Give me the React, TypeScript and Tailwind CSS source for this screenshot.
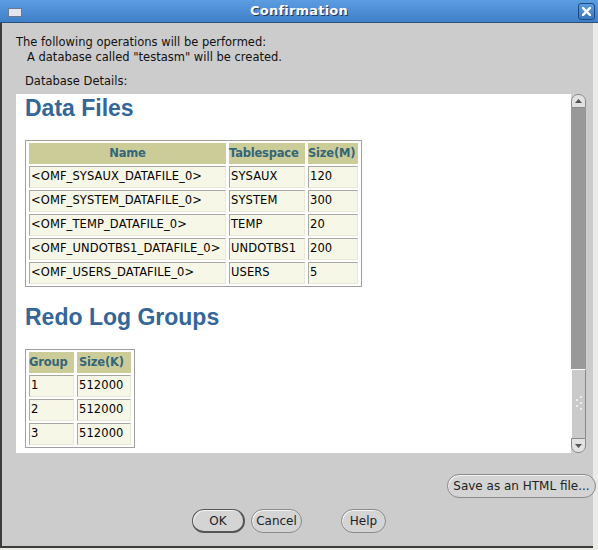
import React from "react";

const dataFiles = [
  ["<OMF_SYSAUX_DATAFILE_0>", "SYSAUX", "120"],
  ["<OMF_SYSTEM_DATAFILE_0>", "SYSTEM", "300"],
  ["<OMF_TEMP_DATAFILE_0>", "TEMP", "20"],
  ["<OMF_UNDOTBS1_DATAFILE_0>", "UNDOTBS1", "200"],
  ["<OMF_USERS_DATAFILE_0>", "USERS", "5"],
];

const redoGroups = [
  ["1", "512000"],
  ["2", "512000"],
  ["3", "512000"],
];

const th =
  "bg-[#cccc99] text-[#336677] font-bold text-[11.5px] tracking-[-0.2px] h-[21px] p-0 leading-none";
const td =
  "bg-[#f7f7e7] border-t border-l border-t-[#a8a8a0] border-l-[#a8a8a0] border-b border-r border-b-[#e8e8d8] border-r-[#e8e8d8] h-[22px] px-[1px] text-[11.5px] tracking-[0.1px] text-black text-left leading-none whitespace-nowrap";

function Btn({ label, w, strong }: { label: string; w: string; strong?: boolean }) {
  return (
    <button
      className={`${w} h-[24px] rounded-full bg-[#d4d4d4] text-[12px] text-[#222] ${
        strong
          ? "border border-[#555] border-r-2 border-b-2"
          : "border border-[#8a8a8a]"
      } shadow-[inset_1px_1px_0_#f4f4f4]`}
    >
      {label}
    </button>
  );
}

export default function App() {
  return (
    <div className="w-[598px] h-[550px] flex flex-col bg-[#ecece6] font-['DejaVu_Sans',sans-serif] overflow-hidden">
      {/* title bar */}
      <div className="h-[23px] relative flex items-center justify-center bg-gradient-to-b from-[#5c9ce0] to-[#4080c8] border-b border-[#2a4f7a]">
        <div className="absolute left-[8px] top-[8px] w-[14px] h-[9px] bg-[#e4e6ee] border border-[#6a7a90]" />
        <span className="text-white font-bold text-[13px] tracking-[0.2px] [text-shadow:1px_1px_0_#1e3a60]">
          Confirmation
        </span>
        <div className="absolute right-[3px] top-[3px] w-[17px] h-[17px] rounded-[3px] border border-[#1d4a80] bg-gradient-to-b from-[#5c9be0] to-[#3a78c0] flex items-center justify-center">
          <svg width="9" height="9" viewBox="0 0 9 9">
            <path d="M1 1 L8 8 M8 1 L1 8" stroke="white" strokeWidth="2.4" strokeLinecap="square" />
          </svg>
        </div>
      </div>

      {/* body */}
      <div className="flex-1 bg-[#cccccc] border-l-2 border-l-[#3c3c3c] border-b-2 border-b-[#3c3c3c] mr-[5px] mb-[2px] flex flex-col text-[#111] text-[11.5px]">
        <div className="pl-[14px] pt-[12px] leading-[15px]">
          <div>The following operations will be performed:</div>
          <div className="pl-[11px]">A database called "testasm" will be created.</div>
          <div className="pl-[9px] mt-[9px]">Database Details:</div>
        </div>

        <div className="ml-[14px] mt-[5px] w-[570px] h-[359px] flex bg-white">
          <div className="flex-1 pl-[9px] pt-[3px] overflow-hidden">
            <h2 className="font-['Liberation_Sans',sans-serif] font-bold text-[23px] leading-[23px] text-[#336699]">
              Data Files
            </h2>
            <table className="mt-[20px] table-fixed border border-[#a0a0a0] border-separate border-spacing-x-[3px] border-spacing-y-[2px]">
              <thead>
                <tr>
                  <th className={`${th} w-[197px]`}>Name</th>
                  <th className={`${th} w-[76px] text-left`}>Tablespace</th>
                  <th className={`${th} w-[50px] text-left`}>Size(M)</th>
                </tr>
              </thead>
              <tbody>
                {dataFiles.map((r) => (
                  <tr key={r[0]}>
                    {r.map((c, i) => (
                      <td key={i} className={td}>
                        {c}
                      </td>
                    ))}
                  </tr>
                ))}
              </tbody>
            </table>

            <h2 className="mt-[19px] font-['Liberation_Sans',sans-serif] font-bold text-[23px] leading-[23px] text-[#336699]">
              Redo Log Groups
            </h2>
            <table className="mt-[20px] table-fixed border border-[#a0a0a0] border-separate border-spacing-x-[3px] border-spacing-y-[2px]">
              <thead>
                <tr>
                  <th className={`${th} w-[45px] text-left`}>Group</th>
                  <th className={`${th} w-[54px] text-left px-[2px]`}>Size(K)</th>
                </tr>
              </thead>
              <tbody>
                {redoGroups.map((r) => (
                  <tr key={r[0]}>
                    {r.map((c, i) => (
                      <td key={i} className={td}>
                        {c}
                      </td>
                    ))}
                  </tr>
                ))}
              </tbody>
            </table>
          </div>

          {/* scrollbar */}
          <div className="w-[15px] flex flex-col bg-[#cfcfcf]">
            <div className="h-[14px] rounded-t-[7px] border border-[#8a8a8a] bg-[#e2e2e2] flex items-center justify-center">
              <svg width="7" height="4" viewBox="0 0 7 4">
                <path d="M0 4 L3.5 0 L7 4 Z" fill="#555" />
              </svg>
            </div>
            <div className="flex-1 bg-[#999999]" />
            <div className="h-[69px] bg-[#cacaca] border-t border-l border-t-white border-l-white border-r border-r-[#888] flex items-center justify-center">
              <svg width="8" height="18" viewBox="0 0 8 18">
                {[
                  [6, 2],
                  [2, 5],
                  [6, 8],
                  [2, 11],
                  [6, 14],
                ].map(([x, y], i) => (
                  <circle key={i} cx={x} cy={y} r="1" fill="#f8f8f8" />
                ))}
              </svg>
            </div>
            <div className="h-[15px] rounded-b-[7px] border border-[#8a8a8a] bg-[#e2e2e2] flex items-center justify-center">
              <svg width="7" height="4" viewBox="0 0 7 4">
                <path d="M0 0 L3.5 4 L7 0 Z" fill="#555" />
              </svg>
            </div>
          </div>
        </div>

        <div className="flex justify-end mt-[21px] -mr-[3px]">
          <Btn label="Save as an HTML file..." w="w-[149px]" />
        </div>
        <div className="flex mt-[11px] pl-[190px]">
          <Btn label="OK" w="w-[53px]" strong />
          <div className="ml-[6px]">
            <Btn label="Cancel" w="w-[51px]" />
          </div>
          <div className="ml-[39px]">
            <Btn label="Help" w="w-[45px]" />
          </div>
        </div>
      </div>
    </div>
  );
}
